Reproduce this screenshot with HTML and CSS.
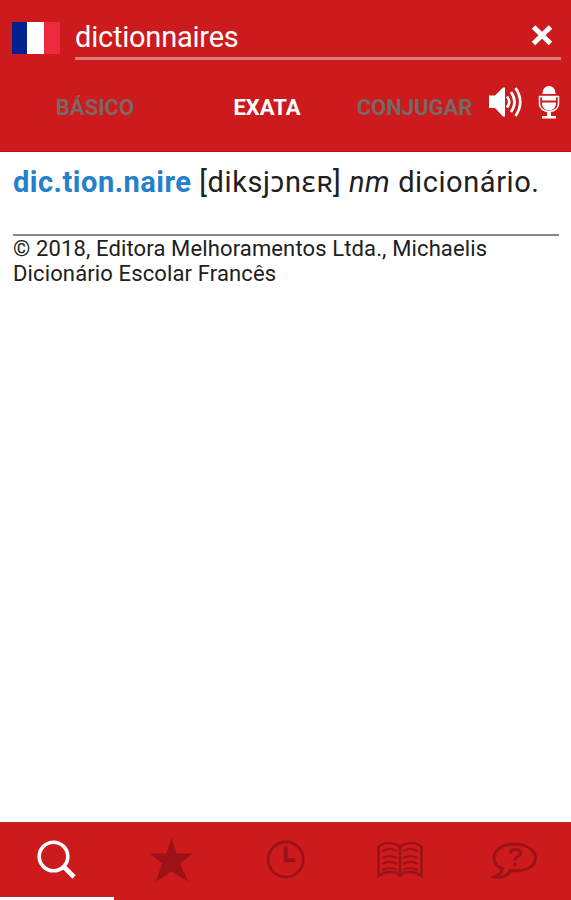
FILE: index.html
```html
<!DOCTYPE html>
<html lang="pt-BR">
<head>
<meta charset="utf-8">
<title>Michaelis Dicionário Escolar Francês</title>
<link rel="stylesheet" href="styles.css">
</head>
<body>
<div class="app">
  <header class="header">
    <div class="search">
      <div class="flag"><span class="flag-blue"></span><span class="flag-white"></span><span class="flag-red"></span></div>
      <div class="field">
        <span class="query">dictionnaires</span>
        <svg class="clear" viewBox="0 0 22 22"><path d="M2.500 3 19.500 19.500M19.500 3 2.500 19.500" fill="none" stroke="#fff" stroke-width="5"/></svg>
      </div>
    </div>
    <nav class="tabs">
      <span class="tab">BÁSICO</span>
      <span class="tab tab-active">EXATA</span>
      <span class="tab">CONJUGAR</span>
      <svg class="speaker" viewBox="0 0 34 32"><path d="M0 9.500h6L14 1.500h2v29h-2L6 22H0z" fill="#fff"/><path d="M18 10.500q4.500 5.500 0 11M22 6q7 10 0 20M26.500 2q9.500 14 0 28" fill="none" stroke="#fff" stroke-width="2.700"/></svg>
      <svg class="mic" viewBox="0 0 22 34"><path d="M4.500 9V8a6.500 7 0 0 1 13 0v1zM4 11h14v4.500H4zM4 17.500h14v1.500a7 6.500 0 0 1-14 0z" fill="#fff"/><path d="M1 11.500h20M1.500 11v8a9.500 7.500 0 0 0 19 0v-8" fill="none" stroke="#fff" stroke-width="1.500"/><path d="M9 26.500h4v4.500h5v2.500H4V31h5z" fill="#fff"/></svg>
    </nav>
  </header>
  <main class="content">
    <p class="entry"><b class="word">dic.tion.naire</b> <span class="phon">[diksjɔnɛʀ]</span> <i class="gram">nm</i> <span class="meaning">dicionário.</span></p>
    <p class="credit">© 2018, Editora Melhoramentos Ltda., Michaelis<br>Dicionário Escolar Francês</p>
  </main>
  <footer class="bottom">
    <span class="item item-active"><svg viewBox="0 0 44 44"><circle cx="18.500" cy="18.500" r="14.300" fill="none" stroke="#fff" stroke-width="3.600"/><path d="m28.500 28.500 10.500 10.500" stroke="#fff" stroke-width="4.600"/></svg></span>
    <span class="item"><svg viewBox="0 0 44 44"><path d="m22.500 0 5.200 15.400H44L31 25.500 39 43.500 22.500 33.500 7 43.500 13 25.500 1 15.400H17.300z" fill="#9d1216"/></svg></span>
    <span class="item"><svg viewBox="0 0 44 44"><circle cx="22.800" cy="21.500" r="17.500" fill="none" stroke="#9d1216" stroke-width="2.800"/><path d="M22.800 8.500v13.800h9.500" fill="none" stroke="#9d1216" stroke-width="4"/></svg></span>
    <span class="item"><svg class="book" viewBox="0 0 48 44" fill="none" stroke="#9d1216" stroke-width="2.600"><path d="M24 9v29M24 9Q20 5 13 5 6 5 2.500 9v29Q9 33 15 34q6 0 9 4 3-4 9-4 6-1 12.500 4V9Q42 5 35 5 28 5 24 9"/><path d="M6.500 13q7-4 14 0M6.500 20q7-4 14 0M6.500 26q7-4 14 0M6.500 32q7-4 14 0M27.500 13q7-4 14 0M27.500 20q7-4 14 0M27.500 26q7-4 14 0M27.500 32q7-4 14 0" stroke-width="2.200"/></svg></span>
    <span class="item"><svg class="help" viewBox="0 0 48 44"><path d="M24.500 6C12.500 6 4 12 4 20c0 5 3.500 9 8.500 11-1 4-3.500 6-8 8 7 1 13-1 16-6.500 15 1.500 25-4 25-12.500C45.500 12 36.500 6 24.500 6z" fill="none" stroke="#9d1216" stroke-width="3"/><path d="M20 15.500q1-4 5.500-4 5 0 5 3.500 0 2.500-3 4-2.500 1.300-2.500 3.500" fill="none" stroke="#9d1216" stroke-width="3"/><circle cx="24.800" cy="26.300" r="1.900" fill="#9d1216"/></svg></span>
  </footer>
</div>
</body>
</html>
```
FILE: styles.css
```css
* { box-sizing: border-box; }
body { margin: 0; font-family: Roboto, "Noto Sans", sans-serif; background: #fff; }
.app { height: 900px; display: flex; flex-direction: column; }
.header { height: 152px; background: #cc1a1d; border-bottom: 1px solid #c4060b; }
.search { display: flex; height: 60px; padding-left: 12px; gap: 15px; }
.flag { display: flex; width: 48px; height: 32px; margin-top: 22px; }
.flag-blue { width: 15px; background: #05208f; }
.flag-white { width: 17px; background: #fff; }
.flag-red { width: 16px; background: #ef2a3d; }
.field { width: 486px; display: flex; justify-content: space-between; border-bottom: 3px solid #d97c7c; color: #fff; }
.query { font-size: 29px; line-height: 34px; margin-top: 20px; letter-spacing: -0.22px; white-space: nowrap; }
.clear { width: 22px; height: 22px; margin: 24px 8px 0 0; }
.tabs { display: grid; grid-template-columns: 190px 154px 141px 52px 24px; height: 91px; }
.tab { font-size: 22px; font-weight: 700; line-height: 26px; margin-top: 35px; text-align: center; color: #7d6663; }
.tab-active { color: #fff; }
.speaker { width: 34px; height: 32px; margin: 26px 0 0 4px; }
.mic { width: 22px; height: 34px; margin: 25px 0 0 1px; }
.content { flex: 1; padding: 0 12px 0 13px; color: #202020; }
.entry { margin: 0; padding-top: 13px; height: 84px; font-size: 29px; line-height: 34px; letter-spacing: 0.58px; white-space: nowrap; border-bottom: 2px solid #888; }
.word { color: #2480cc; letter-spacing: 0.5px; }
.credit { margin: 0; font-size: 22px; line-height: 25px; letter-spacing: 0.13px; white-space: nowrap; }
.bottom { height: 78px; display: grid; grid-template-columns: repeat(5, 1fr); background: #cc1a1d; border-top: 1px solid #b9292a; }
.item { display: flex; justify-content: center; padding-top: 15px; border-bottom: 3px solid transparent; }
.item-active { border-color: #fff; }
.item svg { width: 44px; height: 44px; }
.item .book, .item .help { width: 48px; }
```
